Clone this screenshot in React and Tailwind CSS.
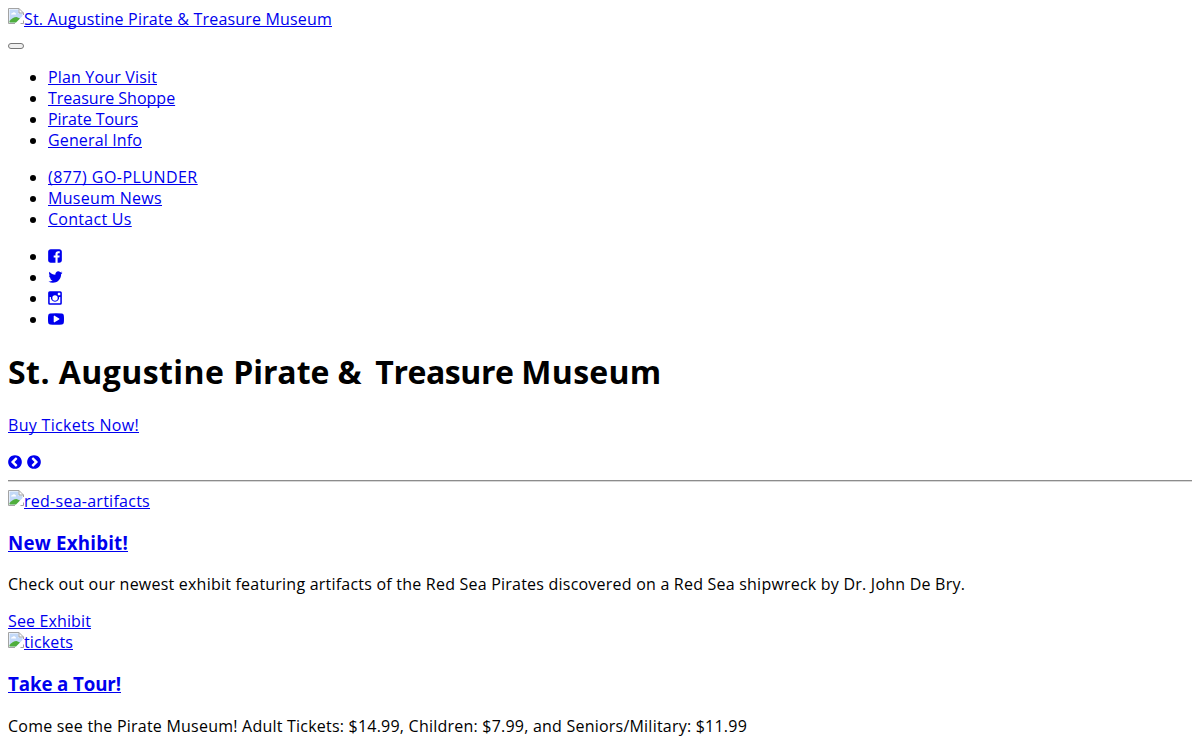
const navLinks = [
  { label: 'Plan Your Visit', className: 'tracking-[0.163px]' },
  { label: 'Treasure Shoppe', className: 'tracking-normal' },
  { label: 'Pirate Tours', className: 'tracking-[-0.03px]' },
  { label: 'General Info', className: 'tracking-[0.139px]' },
];

const infoLinks = [
  { label: '(877) GO-PLUNDER', className: 'tracking-[0.46px]' },
  { label: 'Museum News', className: 'tracking-[0.305px]' },
  { label: 'Contact Us', className: 'tracking-[0.28px]' },
];

const circle = 'm627-499q0 209-103 385.5t-279.5 279.5-385.5 103-385.5-103-279.5-279.5-103-385.5 103-385.5 279.5-279.5 385.5-103 385.5 103 279.5 279.5 103 385.5z';

const icons = {
  facebook: {
    box: '0 0 1536 1792',
    d: 'M1248 128q119 0 203.5 84.5t84.5 203.5v960q0 119-84.5 203.5t-203.5 84.5h-188v-595h199l30-232h-229v-148q0-56 23.5-84t91.5-28l122-1v-207q-63-9-178-9-136 0-217.5 80t-81.5 226v171h-200v232h200v595h-532q-119 0-203.5-84.5t-84.5-203.5v-960q0-119 84.5-203.5t203.5-84.5h960z',
  },
  twitter: {
    box: '64 0 1664 1792',
    d: 'M1684 408q-67 98-162 167 1 14 1 42 0 130-38 259.5t-115.5 248.5-184.5 210.5-258 146-323 54.5q-271 0-496-145 35 4 78 4 225 0 401-138-105-2-188-64.5t-114-159.5q33 5 61 5 43 0 85-11-112-23-185.5-111.5t-73.5-205.5v-4q68 38 146 41-66-44-105-115t-39-154q0-88 44-163 121 149 294.5 238.5t371.5 99.5q-8-38-8-74 0-134 94.5-228.5t228.5-94.5q140 0 236 102 109-21 205-78-37 115-142 178 93-10 186-50z',
  },
  instagram: {
    box: '0 0 1536 1792',
    d: 'M180 128H1356A180 180 0 0 1 1536 308V1484A180 180 0 0 1 1356 1664H180A180 180 0 0 1 0 1484V308A180 180 0 0 1 180 128ZM174 778V1432A58 58 0 0 0 232 1490H1304A58 58 0 0 0 1362 1432V778H1226A464 464 0 1 1 310 778ZM768 596A300 300 0 1 0 768 1196A300 300 0 1 0 768 596ZM1148 302A66 66 0 0 0 1082 368V534A66 66 0 0 0 1148 600H1296A66 66 0 0 0 1362 534V368A66 66 0 0 0 1296 302Z',
  },
  youtube: {
    box: '0 0 1792 1792',
    d: 'M1280 896q0-37-30-54l-512-320q-31-20-65-2-33 18-33 56v640q0 38 33 56 16 8 31 8 20 0 34-10l512-320q30-17 30-54zm512 0q0 96-1 150t-8.5 136.5-22.5 147.5q-16 73-69 123t-124 58q-222 25-671 25t-671-25q-71-8-124.5-58t-69.5-123q-14-65-21.5-147.5t-8.5-136.5-1-150 1-150 8.5-136.5 22.5-147.5q16-73 69-123t124-58q222-25 671-25t671 25q71 8 124.5 58t69.5 123q14 65 21.5 147.5t8.5 136.5 1 150z',
  },
  prev: {
    box: '128 0 1536 1792',
    d: 'M1037 1395l102-102q19-19 19-45t-19-45l-307-307 307-307q19-19 19-45t-19-45l-102-102q-19-19-45-19t-45 19l-454 454q-19 19-19 45t19 45l454 454q19 19 45 19t45-19z' + circle,
  },
  next: {
    box: '128 0 1536 1792',
    d: 'M845 1395l454-454q19-19 19-45t-19-45l-454-454q-19-19-45-19t-45 19l-102 102q-19 19-19 45t19 45l307 307-307 307q-19 19-19 45t19 45l102 102q19 19 45 19t45-19zM1664 896q0 209-103 385.5t-279.5 279.5-385.5 103-385.5-103-279.5-279.5-103-385.5 103-385.5 279.5-279.5 385.5-103 385.5 103 279.5 279.5 103 385.5z',
  },
};

function Icon({ name, className = 'w-[14px]' }) {
  return (
    <svg viewBox={icons[name].box} className={`h-4 shrink-0 ${className}`} fill="currentColor" fillRule="evenodd">
      <path d={icons[name].d} />
    </svg>
  );
}

function Link({ children, className = '' }) {
  return (
    <a href="#" className={`text-[#0000ee] underline decoration-1 underline-offset-[1px] [text-decoration-skip-ink:none] ${className}`}>
      {children}
    </a>
  );
}

// Placeholder for a picture that did not load, followed by its alt text
function MissingImage({ alt, className }) {
  return (
    <div className="flex h-[21px]">
      <svg viewBox="0 0 16 16" className="size-4 shrink-0">
        <path d="M.5.5H11L15.500 5V15.500H.5Z" fill="#fff" />
        <path d="M1.500 1.500H10.500V5.500H14.500V8L8 14.500H1.500Z" fill="#c3d9f8" />
        <path d="M3 6.500a1.500 1.500 0 0 1 1.500-1.500 2 2 0 0 1 3.500 1.500Z" fill="#fff" />
        <path d="M1.500 14.500V13C4 10.500 6 9 8.500 9L12 10.500 8 14.500Z" fill="#4fae3c" />
        <path d="M7 15.500H.5V.5H11L15.500 5V7M11 .5V5H15.500M12.500 15.500H15.500V12.500" fill="none" stroke="#a3a3a3" />
        <path d="M16 7.500V10L10.500 16H7.500Z" fill="#fff" />
      </svg>
      <Link className={className}>{alt}</Link>
    </div>
  );
}

function LinkList({ links }) {
  return (
    <ul className="mb-4 list-disc pl-10">
      {links.map((link) => (
        <li key={link.label} className="h-[21px]">
          <Link className={link.className}>{link.label}</Link>
        </li>
      ))}
    </ul>
  );
}

export default function App() {
  return (
    <div className="h-[740px] overflow-hidden bg-white p-2 font-['Open_Sans',sans-serif] text-[16px] leading-[21px] text-black">
      <MissingImage alt="St. Augustine Pirate & Treasure Museum" className="pt-px tracking-[0.181px]" />
      <button className="mt-[14px] mb-[18px] block h-[6px] w-4 rounded-[3px] border border-[#767676] bg-[#efefef]" />

      <LinkList links={navLinks} />
      <LinkList links={infoLinks} />
      <ul className="list-disc pl-10 [&_svg]:inline-block [&_svg]:align-[-2px]">
        <li className="h-[21px]"><a href="#" className="text-[#0000ee]"><Icon name="facebook" /></a></li>
        <li className="h-[21px]"><a href="#" className="text-[#0000ee]"><Icon name="twitter" className="w-[15px]" /></a></li>
        <li className="h-[21px]"><a href="#" className="text-[#0000ee]"><Icon name="instagram" /></a></li>
        <li className="h-[21px]"><a href="#" className="text-[#0000ee]"><Icon name="youtube" className="w-4" /></a></li>
      </ul>

      <h1 className="mt-[21px] text-[32px] leading-[42px] font-bold">
        <span className="tracking-[0.44px]">St. Augustine </span>
        <span className="tracking-[-0.06px]">Pirate </span>
        <span className="tracking-[2.7px]">&amp; </span>
        <span className="tracking-[-0.44px]">Treasure </span>
        <span className="tracking-[0.3px]">Museum</span>
      </h1>
      <p className="mt-[22px]"><Link className="tracking-[0.312px]">Buy Tickets Now!</Link></p>
      <div className="mt-[15px] flex h-[21px] items-center gap-[4.500px] text-[#0000ee]">
        <Icon name="prev" />
        <Icon name="next" />
      </div>
      <hr className="mt-2 mb-2 h-[2px] border-t border-b border-t-[#8c8c8c] border-b-[#d8d8d8]" />

      <MissingImage alt="red-sea-artifacts" className="pt-px tracking-[0.262px]" />
      <h3 className="mt-[19px] text-[18.72px] leading-[25px] font-bold"><Link className="tracking-[0.215px]">New Exhibit!</Link></h3>
      <p className="mt-[19px] tracking-[0.22px]">
        Check out our newest exhibit featuring artifacts of the Red Sea Pirates discovered on a Red Sea shipwreck by Dr. John De Bry.
      </p>
      <p className="mt-4"><Link className="tracking-[0.132px]">See Exhibit</Link></p>
      <MissingImage alt="tickets" className="tracking-[0.124px]" />
      <h3 className="mt-[18px] text-[18.72px] leading-[25px] font-bold"><Link className="tracking-[-0.112px]">Take a Tour!</Link></h3>
      <p className="mt-5 tracking-[0.222px]">
        Come see the Pirate Museum! Adult Tickets: $14.99, Children: $7.99, and Seniors/Military: $11.99
      </p>
    </div>
  );
}
